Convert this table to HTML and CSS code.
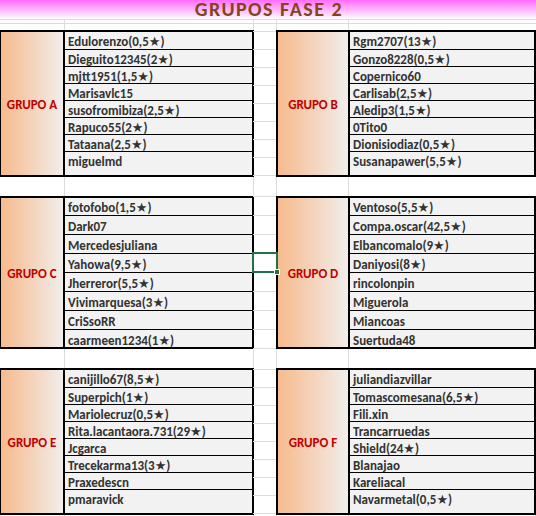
FILE: index.html
```html
<!DOCTYPE html>
<html lang="es">
<head>
<meta charset="utf-8">
<title>Grupos Fase 2</title>
<link rel="stylesheet" href="styles.css">
</head>
<body>
<div class="sheet">
  <div class="title-row"><h1 class="title">GRUPOS FASE 2</h1></div>
  <div class="pad-row pad-thin"></div>
  <div class="pad-row pad-wide"></div>

  <div class="band band-short">
    <section class="group group-left">
      <div class="label">GRUPO A</div>
      <ul class="names">
        <li>Edulorenzo(0,5★)</li>
        <li>Dieguito12345(2★)</li>
        <li>mjtt1951(1,5★)</li>
        <li>Marisavlc15</li>
        <li>susofromibiza(2,5★)</li>
        <li>Rapuco55(2★)</li>
        <li>Tataana(2,5★)</li>
        <li>miguelmd</li>
      </ul>
    </section>
    <div class="gutter"></div>
    <section class="group group-right">
      <div class="label">GRUPO B</div>
      <ul class="names">
        <li>Rgm2707(13★)</li>
        <li>Gonzo8228(0,5★)</li>
        <li>Copernico60</li>
        <li>Carlisab(2,5★)</li>
        <li>Aledip3(1,5★)</li>
        <li>0Tito0</li>
        <li>Dionisiodiaz(0,5★)</li>
        <li>Susanapawer(5,5★)</li>
      </ul>
    </section>
  </div>

  <div class="gap-row"></div>

  <div class="band band-tall">
    <section class="group group-left">
      <div class="label">GRUPO C</div>
      <ul class="names">
        <li>fotofobo(1,5★)</li>
        <li>Dark07</li>
        <li>Mercedesjuliana</li>
        <li>Yahowa(9,5★)</li>
        <li>Jherreror(5,5★)</li>
        <li>Vivimarquesa(3★)</li>
        <li>CriSsoRR</li>
        <li>caarmeen1234(1★)</li>
      </ul>
    </section>
    <div class="gutter"></div>
    <section class="group group-right">
      <div class="label">GRUPO D</div>
      <ul class="names">
        <li>Ventoso(5,5★)</li>
        <li>Compa.oscar(42,5★)</li>
        <li>Elbancomalo(9★)</li>
        <li>Daniyosi(8★)</li>
        <li>rincolonpin</li>
        <li>Miguerola</li>
        <li>Miancoas</li>
        <li>Suertuda48</li>
      </ul>
    </section>
  </div>

  <div class="gap-row"></div>

  <div class="band band-short">
    <section class="group group-left">
      <div class="label">GRUPO E</div>
      <ul class="names">
        <li>canijillo67(8,5★)</li>
        <li>Superpich(1★)</li>
        <li>Mariolecruz(0,5★)</li>
        <li>Rita.lacantaora.731(29★)</li>
        <li>Jcgarca</li>
        <li>Trecekarma13(3★)</li>
        <li>Praxedescn</li>
        <li>pmaravick</li>
      </ul>
    </section>
    <div class="gutter"></div>
    <section class="group group-right">
      <div class="label">GRUPO F</div>
      <ul class="names">
        <li>juliandiazvillar</li>
        <li>Tomascomesana(6,5★)</li>
        <li>Fili.xin</li>
        <li>Trancarruedas</li>
        <li>Shield(24★)</li>
        <li>Blanajao</li>
        <li>Kareliacal</li>
        <li>Navarmetal(0,5★)</li>
      </ul>
    </section>
  </div>

  <div class="selection"><span class="handle"></span></div>
</div>
</body>
</html>
```

FILE: styles.css
```css
* { box-sizing: border-box; }

html, body {
  margin: 0;
  padding: 0;
  background: #fff;
}

.sheet {
  position: relative;
  width: 536px;
  height: 516px;
  overflow: hidden;
  font-family: Calibri, Carlito, Lato, "DejaVu Sans", sans-serif;
  font-weight: 700;
  background:
    linear-gradient(#dcdcdc, #dcdcdc) 64px 0 / 1px 100% no-repeat,
    linear-gradient(#dcdcdc, #dcdcdc) 253px 0 / 1px 100% no-repeat,
    linear-gradient(#dcdcdc, #dcdcdc) 276px 0 / 1px 100% no-repeat,
    linear-gradient(#dcdcdc, #dcdcdc) 348px 0 / 1px 100% no-repeat,
    #fff;
}

.title-row {
  height: 20px;
  border-bottom: 1px solid #dcdcdc;
  background: linear-gradient(#ff6cff, #ffe6ff 85%, #ffffff);
  display: flex;
  justify-content: center;
  align-items: flex-start;
}

.title {
  margin: 0 0 0 2px;
  font-size: 20px;
  line-height: 19px;
  font-weight: 700;
  color: #82451a;
  letter-spacing: 1.5px;
  white-space: nowrap;
}

.pad-row { border-bottom: 1px solid #dcdcdc; }
.pad-thin { height: 4px; }
.pad-wide { height: 6px; border-bottom: 0; }

.band {
  display: grid;
  grid-template-columns: 254px 22px 260px;
}
.band-short { height: 147px; }
.band-tall { height: 153px; }

.gap-row { height: 19px; }

.gutter {
  background: repeating-linear-gradient(to bottom, #dcdcdc 0 1px, transparent 1px 18px);
  background-position: 0 1px;
  margin-left: -1px;
  margin-right: -1px;
}
.band-tall .gutter {
  background: repeating-linear-gradient(to bottom, #dcdcdc 0 1px, transparent 1px 19px);
  background-position: 0 0;
}

.group {
  display: grid;
  border: 2px solid #000;
  background: #f2f2f2;
}
.group-left {
  grid-template-columns: 64px 1fr;
  border-left-width: 1px;
}
.group-right {
  grid-template-columns: 72px 1fr;
}

.label {
  border-right: 2px solid #000;
  background: linear-gradient(90deg, #f7bb8d 0%, #f4d3bb 50%, #f1eeeb 100%);
  color: #c00000;
  font-size: 13px;
  display: flex;
  align-items: center;
  justify-content: center;
  padding-top: 2px;
  white-space: nowrap;
}

.names {
  list-style: none;
  margin: 0;
  padding: 0;
}

.names li {
  height: 17px;
  padding: 2px 0 0 3px;
  font-size: 13px;
  line-height: 15px;
  color: #333;
  white-space: nowrap;
  overflow: hidden;
  border-top: 1px solid #000;
}
.names li:first-child { border-top: 0; }

.band-tall .names li { height: 19px; padding-top: 3px; }
.band-tall .names li:first-child { height: 17px; padding-top: 2px; }
.band-tall .names li:last-child { height: 18px; }

.selection {
  position: absolute;
  left: 252px;
  top: 252px;
  width: 26px;
  height: 21px;
  border: 2px solid #217346;
}
.handle {
  position: absolute;
  right: -4px;
  bottom: -4px;
  width: 6px;
  height: 6px;
  background: #217346;
  border: 1px solid #fff;
}
```
